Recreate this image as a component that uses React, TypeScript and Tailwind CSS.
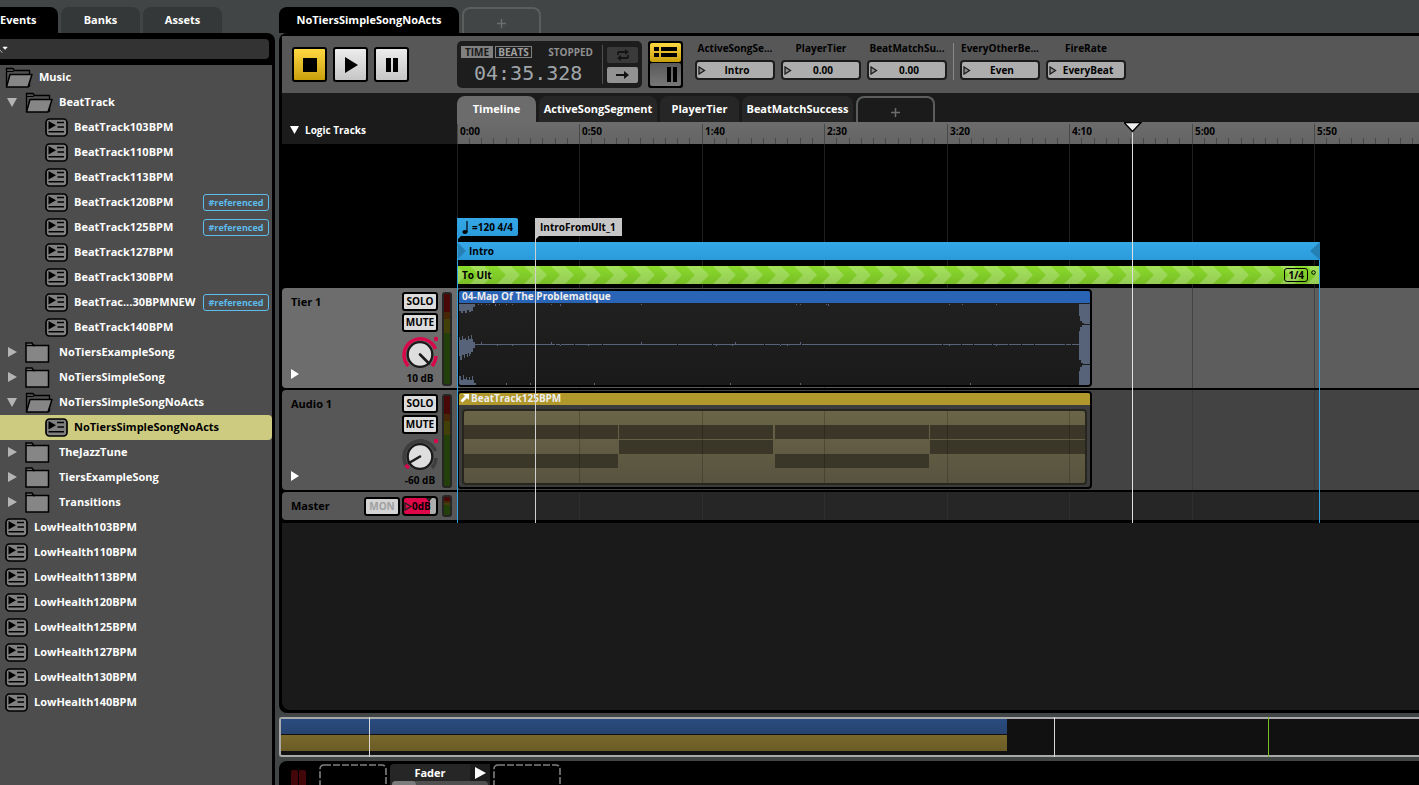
import React from 'react';

const SCALE = 2.45; // pixels per second
const at = (seconds: number) => Math.floor(seconds * SCALE);

type Row = {
  kind: 'folder' | 'folder-open' | 'event';
  label: string;
  depth: 0 | 1 | 2;
  arrow?: 'open' | 'closed';
  tag?: boolean;
  selected?: boolean;
};

const rows: Row[] = [
  { kind: 'folder-open', label: 'Music', depth: 0 },
  { kind: 'folder-open', label: 'BeatTrack', depth: 1, arrow: 'open' },
  { kind: 'event', label: 'BeatTrack103BPM', depth: 2 },
  { kind: 'event', label: 'BeatTrack110BPM', depth: 2 },
  { kind: 'event', label: 'BeatTrack113BPM', depth: 2 },
  { kind: 'event', label: 'BeatTrack120BPM', depth: 2, tag: true },
  { kind: 'event', label: 'BeatTrack125BPM', depth: 2, tag: true },
  { kind: 'event', label: 'BeatTrack127BPM', depth: 2 },
  { kind: 'event', label: 'BeatTrack130BPM', depth: 2 },
  { kind: 'event', label: 'BeatTrac...30BPMNEW', depth: 2, tag: true },
  { kind: 'event', label: 'BeatTrack140BPM', depth: 2 },
  { kind: 'folder', label: 'NoTiersExampleSong', depth: 1, arrow: 'closed' },
  { kind: 'folder', label: 'NoTiersSimpleSong', depth: 1, arrow: 'closed' },
  { kind: 'folder-open', label: 'NoTiersSimpleSongNoActs', depth: 1, arrow: 'open' },
  { kind: 'event', label: 'NoTiersSimpleSongNoActs', depth: 2, selected: true },
  { kind: 'folder', label: 'TheJazzTune', depth: 1, arrow: 'closed' },
  { kind: 'folder', label: 'TiersExampleSong', depth: 1, arrow: 'closed' },
  { kind: 'folder', label: 'Transitions', depth: 1, arrow: 'closed' },
  { kind: 'event', label: 'LowHealth103BPM', depth: 0 },
  { kind: 'event', label: 'LowHealth110BPM', depth: 0 },
  { kind: 'event', label: 'LowHealth113BPM', depth: 0 },
  { kind: 'event', label: 'LowHealth120BPM', depth: 0 },
  { kind: 'event', label: 'LowHealth125BPM', depth: 0 },
  { kind: 'event', label: 'LowHealth127BPM', depth: 0 },
  { kind: 'event', label: 'LowHealth130BPM', depth: 0 },
  { kind: 'event', label: 'LowHealth140BPM', depth: 0 },
];

const majors = [
  { t: 0, label: '0:00' },
  { t: 50, label: '0:50' },
  { t: 100, label: '1:40' },
  { t: 150, label: '2:30' },
  { t: 200, label: '3:20' },
  { t: 250, label: '4:10' },
  { t: 300, label: '5:00' },
  { t: 350, label: '5:50' },
];

const FolderOpen = () => (
  <svg width="28" height="21" viewBox="0 0 28 21" className="shrink-0">
    <path d="M1.5 19V1.5h6.5l1.5 2h15V19z" fill="#505050" stroke="#000" strokeWidth="1.3" />
    <path d="M1.5 4.5H8l1.5-1" fill="none" stroke="#000" />
    <path d="M5 7.5h22L23 20H1.5z" fill="#868686" stroke="#000" strokeWidth="1.5" strokeLinejoin="round" />
  </svg>
);

const Folder = () => (
  <svg width="28" height="21" viewBox="0 0 28 21" className="shrink-0">
    <path d="M1 20V1h6l1.500 2.500h15V20z" fill="#868686" stroke="#000" strokeWidth="1.5" />
    <path d="M1 3.500H10" stroke="#000" strokeWidth="1.5" />
  </svg>
);

const EventIcon = () => (
  <svg width="23" height="19" viewBox="0 0 23 19" className="shrink-0">
    <rect x="1" y="1" width="21" height="17" rx="3.5" fill="#808080" stroke="#000" strokeWidth="1.7" />
    <path d="M3.5 3v8.5L11 7.2z" fill="#000" />
    <path d="M12 4.5h7M12.5 9h6.5M3.5 13.8h15.5" stroke="#000" strokeWidth="1.4" />
  </svg>
);

const Arrow = ({ open }: { open: boolean }) => (
  <svg width="12" height="12" viewBox="0 0 12 12" className="shrink-0">
    <path d={open ? 'M1 2h10L6 11z' : 'M2 1v10l9-5z'} fill="#b4b4b4" />
  </svg>
);

const TreeRow = ({ row }: { row: Row }) => {
  const indent =
    row.depth === 0 ? 'pl-[5px]' : row.depth === 1 ? 'pl-[6px]' : 'pl-[45px]';
  return (
    <li
      className={`flex h-[25px] items-center pr-[3px] pb-px leading-4 ${indent} ${
        row.selected ? 'rounded-r bg-[#cccb80] text-black' : 'text-white'
      }`}
    >
      {row.arrow && (
        <span className="mr-[7px] flex">
          <Arrow open={row.arrow === 'open'} />
        </span>
      )}
      {row.kind === 'folder' && <Folder />}
      {row.kind === 'folder-open' && <FolderOpen />}
      {row.kind === 'event' && <EventIcon />}
      <span className="ml-[6px] whitespace-nowrap">{row.label}</span>
      {row.tag && (
        <span className="ml-auto w-[66px] shrink-0 rounded-[3px] border border-[#5cbcec] text-center text-[9px] leading-[15px] text-[#5cbcec]">
          #referenced
        </span>
      )}
    </li>
  );
};

const Browser = () => (
  <aside className="flex w-[275px] shrink-0 flex-col">
    <div className="flex gap-[3px] pt-[7px] text-white">
      <button className="h-[26px] w-[58px] rounded-tr-lg bg-black pr-[22px]">Events</button>
      <button className="h-[26px] w-[79px] rounded-t-lg bg-[#343838]">Banks</button>
      <button className="h-[26px] w-[79px] rounded-t-lg bg-[#343838]">Assets</button>
    </div>
    <div className="flex grow flex-col rounded-tr-lg bg-black pr-[3px]">
      <label className="mt-[6px] mr-[3px] mb-[6px] flex h-5 items-center rounded-r bg-[#333]">
        <svg width="8" height="10" viewBox="0 0 8 10">
          <path d="M0 6l2.5 3M3 3h4.500L5.200 5.500z" fill="#fff" stroke="#fff" strokeWidth=".6" />
        </svg>
        <input aria-label="Search events" className="h-5 w-full bg-transparent text-white outline-none" />
      </label>
      <ul className="grow bg-[#4d4d4d]">
        {rows.map((row, i) => (
          <TreeRow key={i} row={row} />
        ))}
      </ul>
    </div>
  </aside>
);

const TransportButton = ({ label, on, children }: { label: string; on?: boolean; children: React.ReactNode }) => (
  <button
    aria-label={label}
    className={`flex h-[35px] w-[35px] items-center justify-center rounded-[3px] border-2 border-black bg-linear-to-b ${
      on ? 'from-[#ffd940] to-[#c99f08]' : 'from-[#ececec] to-[#c6c6c6]'
    }`}
  >
    {children}
  </button>
);

const Param = ({ name, value }: { name: string; value: string }) => (
  <label className="flex w-20 flex-col items-center text-[10px] text-black">
    <span className="leading-[14px] whitespace-nowrap">{name}</span>
    <span className="mt-[5px] flex h-5 w-20 items-center rounded border-2 border-[#1c1c1c] bg-[#adadad] pl-px">
      <svg width="8" height="9" viewBox="0 0 8 9" className="shrink-0">
        <path d="M1 1v7l5.500-3.500z" fill="#909090" stroke="#1c1c1c" strokeWidth="1.3" />
      </svg>
      <input defaultValue={value} className="w-full min-w-0 bg-transparent pr-[5px] text-center outline-none" />
    </span>
  </label>
);

const Toolbar = () => (
  <div className="flex h-[57px] items-start bg-[#575757]">
    <div className="flex gap-[6px] pt-[11px] pl-[10px]">
      <TransportButton label="Stop" on>
        <span className="h-[14px] w-[14px] bg-black" />
      </TransportButton>
      <TransportButton label="Play">
        <svg width="16" height="16" viewBox="0 0 16 16"><path d="M2 0v16l13-8z" /></svg>
      </TransportButton>
      <TransportButton label="Pause">
        <svg width="12" height="14" viewBox="0 0 12 14"><path d="M0 0h5v14H0zM7 0h5v14H7z" /></svg>
      </TransportButton>
    </div>
    <div className="mt-[5px] ml-12 flex h-[47px] w-[185px] items-center rounded-[5px] bg-[#1d1d1d] pr-1 pl-1">
      <div className="flex w-[141px] flex-col">
        <div className="flex items-center pr-[9px] text-[10px] leading-[10px] text-[#a0a0a0]">
          <button className="h-3 w-8 bg-[#808080] text-[#1a1a1a]">TIME</button>
          <button className="ml-0.5 h-3 w-[37px] border border-[#808080]">BEATS</button>
          <span className="ml-auto text-[#909090]">STOPPED</span>
        </div>
        <div className="mt-1 pl-[13px] font-['DejaVu_Sans_Mono',monospace] text-[20px] leading-[22px] font-normal text-[#a0a5aa]">
          04:35.328
        </div>
      </div>
      <div className="mr-1 h-[39px] w-px bg-[#505050]" />
      <div className="flex flex-col gap-1">
        <button aria-label="Loop" className="flex h-4 w-[31px] items-center justify-center rounded-[2px] bg-[#3a3a3a]">
          <svg width="12" height="12" viewBox="0 0 12 12" fill="none" stroke="#151515" strokeWidth="1.800">
            <path d="M1 6V4q0-1 1-1h7M11 6v2q0 1-1 1H3" />
            <path d="M8 0l4 3-4 3zM4 6L0 9l4 3z" fill="#151515" stroke="none" />
          </svg>
        </button>
        <button aria-label="Follow" className="flex h-4 w-[31px] items-center justify-center rounded-[2px] bg-[#929292]">
          <svg width="13" height="8" viewBox="0 0 13 8"><path d="M0 3h8V0l5 4-5 4V5H0z" fill="#111" /></svg>
        </button>
      </div>
    </div>
    <div className="mt-[5px] ml-[6px] flex h-[47px] w-[35px] flex-col gap-px rounded-[3px] border-2 border-black bg-black">
      <button aria-label="Tracks view" className="flex grow items-center justify-center rounded-[2px] bg-linear-to-b from-[#ffd940] to-[#c99f08]">
        <svg width="23" height="10" viewBox="0 0 23 10"><path d="M0 0h5v4H0zM7 0h16v4H7zM0 6h5v4H0zM7 6h16v4H7z" /></svg>
      </button>
      <button aria-label="Console view" className="flex grow items-center justify-end rounded-[2px] bg-linear-to-b from-[#5a5a5a] to-[#777] pr-1">
        <svg width="10" height="15" viewBox="0 0 10 15"><path d="M0 0h4v15H0zM6 0h4v15H6z" /></svg>
      </button>
    </div>
    <div className="flex gap-[6px] pt-[5px] pl-3">
      <Param name="ActiveSongSe..." value="Intro" />
      <Param name="PlayerTier" value="0.00" />
      <Param name="BeatMatchSu..." value="0.00" />
      <div className="mt-[2px] h-[37px] w-px bg-[#8a8a8a]" />
      <Param name="EveryOtherBe..." value="Even" />
      <Param name="FireRate" value="EveryBeat" />
    </div>
  </div>
);

const AddTab = ({ label }: { label: string }) => (
  <button
    aria-label={label}
    className="flex h-[26px] w-[79px] items-center justify-center rounded-t-lg border-2 border-b-0 border-[#5c5e5e] pt-1"
  >
    <svg width="9" height="9" viewBox="0 0 9 9"><path d="M4.500 0v9M0 4.500h9" stroke="#6c6e6e" strokeWidth="1.500" /></svg>
  </button>
);

const Ruler = () => (
  <div className="relative h-[22px] overflow-hidden bg-linear-to-b from-[#6c6c6c] to-[#646464]">
    <svg className="absolute inset-0 h-full w-full">
      {Array.from({ length: 90 }, (_, i) => (
        <rect key={i} x={at(i * 5)} y={i % 10 === 0 ? 2 : 16} width="1" height="20" fill="#484848" />
      ))}
    </svg>
    {majors.map((m) => (
      <span key={m.t} className="absolute top-[2px] text-[10px] leading-[14px] text-black" style={{ left: at(m.t) + 3 }}>
        {m.label}
      </span>
    ))}
  </div>
);

const GridLines = () => (
  <div className="pointer-events-none absolute inset-0">
    {majors.map((m) => (
      <div key={m.t} className="absolute inset-y-0 w-px bg-[#333]/60" style={{ left: at(m.t) }} />
    ))}
  </div>
);

const LogicLanes = () => (
  <div className="relative h-36 overflow-hidden bg-black pt-[74px] text-[10px] leading-[18px] text-black">
    <GridLines />
    <div className="relative flex h-6 items-start">
      <div className="flex w-[78px]">
        <div className="relative flex h-[18px] w-[61px] items-center gap-1 rounded-r-[2px] bg-linear-to-b from-[#35a8e8] to-[#2a9ada] pl-[5px]">
          <svg width="6" height="13" viewBox="0 0 6 13"><path d="M5 0v11" stroke="#000" strokeWidth="1.200" /><ellipse cx="3" cy="11" rx="2.600" ry="2" /></svg>
          <span className="whitespace-nowrap">=120 4/4</span>
          <svg className="absolute top-[18px] left-0" width="5" height="5"><path d="M0 0h4L0 4z" fill="#2f9fdf" /></svg>
        </div>
      </div>
      <div className="relative h-[18px] bg-[#c6c6c6] pr-[6px] pl-[5px] whitespace-nowrap">
        IntroFromUlt_1
        <svg className="absolute top-[18px] left-0" width="5" height="5"><path d="M0 0h4L0 4z" fill="#c6c6c6" /></svg>
      </div>
    </div>
    <div className="relative flex h-[18px] w-[863px] items-center justify-between bg-linear-to-b from-[#35a8e8] to-[#2a9ada]">
      <div className="flex items-center">
        <svg width="9" height="18" viewBox="0 0 9 18"><path d="M0 0v18l9-9z" fill="#2580b5" /></svg>
        <span className="ml-[3px]">Intro</span>
      </div>
      <svg width="10" height="18" viewBox="0 0 10 18"><path d="M10 0v18L0 9z" fill="#2580b5" /></svg>
    </div>
    <div className="relative mt-[6px] flex h-[18px] w-[862px] items-center justify-between bg-linear-to-b from-[#8adb2c] to-[#78bd26]">
      <svg className="absolute inset-0" width="862" height="18">
        <defs>
          <pattern id="chev" width="27" height="18" patternUnits="userSpaceOnUse" x="13">
            <path d="M0 0h14l9 9-9 9H0l9-9z" fill="#fff" fillOpacity=".22" />
          </pattern>
        </defs>
        <rect width="862" height="18" fill="url(#chev)" />
      </svg>
      <span className="relative pl-[5px]">To Ult</span>
      <span className="relative flex items-center gap-[3px] pr-[3px]">
        <span className="rounded-[3px] border border-black px-[3px] leading-[12px]">1/4</span>
        <svg width="5" height="11" viewBox="0 0 5 11"><circle cx="2.500" cy="2.500" r="1.800" fill="none" stroke="#000" /></svg>
      </span>
    </div>
  </div>
);

const Meter = ({ small }: { small?: boolean }) => (
  <div className={`w-[10px] rounded-[3px] border-2 border-[#262626] bg-[#24400a] ${small ? 'h-[22px]' : 'h-[94px]'}`}>
    <div className={small ? 'h-1 bg-[#480808]' : 'h-[18px] bg-[#480808]'} />
    <div className={small ? 'h-0.5 bg-[#482608]' : 'h-[7px] bg-[#482608]'} />
    <div className={small ? 'h-0.5 bg-[#424008]' : 'h-[14px] bg-[#424008]'} />
  </div>
);

const Knob = ({ loud }: { loud?: boolean }) => (
  <svg width="36" height="35" viewBox="0 0 36 35">
    <path
      d="M6.300 30A16.300 16.300 0 1 1 33.500 13M34 20a16.300 16.300 0 0 1-4 10"
      fill="none"
      stroke={loud ? '#d9084a' : '#3e3e3e'}
      strokeWidth="3.500"
    />
    {!loud && <path d="M3.500 27l3.500 3" stroke="#d9084a" strokeWidth="3.500" />}
    <circle cx="34" cy="3" r="2.200" fill="#d9084a" />
    <circle cx="18" cy="18.500" r="12.300" fill="#dedede" stroke="#1a1a1a" strokeWidth="2.300" />
    <path d={loud ? 'M18 18.500l9 9' : 'M18 18.500l-11 6.500'} stroke="#1a1a1a" strokeWidth="2.600" strokeLinecap="round" />
  </svg>
);

const PadButton = ({ children }: { children: React.ReactNode }) => (
  <button className="h-[19px] w-9 rounded-[3px] border-2 border-black bg-[#dcdcdc] text-[10px] leading-[15px] text-black">
    {children}
  </button>
);

const TrackHead = ({ name, level, loud }: { name: string; level: string; loud?: boolean }) => (
  <div className={`flex h-[100px] rounded-l pt-1 ${loud ? 'bg-[#6d6d6d]' : 'bg-[#575757]'}`}>
    <div className="flex grow flex-col justify-between pb-[9px] pl-[9px]">
      <span className="leading-[20px]">{name}</span>
      <button aria-label={`Expand ${name}`} className="flex w-3">
        <svg width="8" height="10" viewBox="0 0 8 10"><path d="M0 0v10l8-5z" fill="#fff" /></svg>
      </button>
    </div>
    <div className="flex w-9 flex-col items-center gap-0.5">
      <PadButton>SOLO</PadButton>
      <PadButton>MUTE</PadButton>
      <div className="pt-0.5"><Knob loud={loud} /></div>
      <span className="-mt-0.5 text-[10px] leading-[14px] whitespace-nowrap">{level}</span>
    </div>
    <div className="pr-[5px] pl-1">
      <Meter />
    </div>
  </div>
);

// stray peaks on the top, centre and bottom lines of the waveform, as x offsets
const topPeaks = [19, 22, 27, 30, 36, 40, 47, 53, 92, 101, 182, 337, 341, 367, 369, 490, 503, 537];
const midPeaks = [22, 38, 53, 92, 101, 129, 182, 257, 273, 276, 321, 328, 341, 490, 537];
const lowPeaks = [19, 23, 33, 47, 52, 58, 66, 71, 79, 101, 108, 135, 249, 254, 261, 271, 283, 302, 324, 341, 367, 496, 504, 511, 518];
const gaps = [96, 101, 115, 143, 218, 253, 305, 321, 342, 483, 502, 514, 533, 549, 562, 575, 606, 612];

const Waveform = () => (
  <svg className="block" width="631" height="82" viewBox="0 0 631 82">
    <g fill="#566379">
      <path d="M0 0h16v3h-2v4h-2v1h-2v-2H8v3H6V7H4v2H2V7H0z" />
      <path d="M0 33h1v3h2v-4h1v3h2v-1h1v2h2v-4h1v3h2v-4h1v4h1v3h2v6h-2v4h-2v2h-1v2h-1v-3H9v4H8v-3H6v4H5v-3H3v5H1v-4H0z" />
      <path d="M0 82v-10h2v4h2v-5h1v4h2v-2h1v3h2v-3h1v3h2v-4h1v4h1v3h2v3z" />
      <path d="M16 40h604v1H16z" />
      {topPeaks.map((x, i) => (
        <rect key={x} x={x} y="0" width="1" height={i % 5 === 4 ? 2 : 1} />
      ))}
      {midPeaks.map((x, i) => (
        <rect key={x} x={x} y={i % 3 ? 40 : 38} width="1" height={i % 3 ? 2 : 3} />
      ))}
      {lowPeaks.map((x, i) => (
        <rect key={x} x={x} y={i % 4 === 3 ? 79 : 81} width="1" height="3" />
      ))}
      <path d="M620 0h11v20h-6v-1h-2v-2h-2v-5h-1zM620 27h1v-4h2v-2h8v39h-7v-1h-2v-3h-2zM620 67h1v-4h2v-2h8v21h-11z" />
    </g>
    {gaps.map((x) => (
      <rect key={x} x={x} y="40" width="1" height="1" fill="#1d1d1d" />
    ))}
  </svg>
);

// dark cells of the nested event, as [x, width, row]
const blocks: [number, number, number][] = [
  [0, 154, 0], [0, 154, 2], [155, 154, 0], [155, 154, 1],
  [311, 154, 0], [311, 154, 2], [466, 155, 0], [466, 155, 1],
];
const blockTops = [14, 29, 43];

const NestedEvent = () => (
  <svg className="mt-1 ml-[3px] block rounded-[4px] border-2 border-[#26261f] bg-linear-to-b from-[#6a6548] to-[#58533e]" width="625" height="76" viewBox="0 0 621 72">
    {blocks.map(([x, w, r]) => (
      <rect key={`${x}-${r}`} x={x} y={blockTops[r]} width={w} height="14" fill="#3a3728" />
    ))}
    {majors.map((m) => (
      <rect key={m.t} x={at(m.t) - 7} y="0" width="1" height="72" fill="#000" fillOpacity=".2" />
    ))}
  </svg>
);

const Line = ({ left, className }: { left: number; className: string }) => (
  <div className={`pointer-events-none absolute w-px ${className}`} style={{ left }} />
);

const Editor = () => (
  <section className="flex h-[680px] flex-col rounded-l-lg bg-black pt-[3px] pb-[3px] pl-[3px]">
    <Toolbar />
    <div className="flex">
      <div className="flex w-[175px] shrink-0 flex-col bg-black">
        <div className="flex h-[51px] items-end gap-[5px] bg-[#1b1b1b] pb-[6px] pl-2 text-[10px] leading-[16px] text-white">
          <svg width="10" height="16" viewBox="0 0 10 16"><path d="M0 4h9L4.500 12z" fill="#fff" /></svg>
          Logic Tracks
        </div>
        <div className="mt-36 flex flex-col gap-0.5">
          <TrackHead name="Tier 1" level="10 dB" loud />
          <TrackHead name="Audio 1" level="-60 dB" />
          <div className="flex h-[28px] items-center rounded-l bg-[#575757] pr-[5px] pl-[9px]">
            <span className="grow">Master</span>
            <button className="h-[19px] w-9 rounded-[3px] border-2 border-black bg-[#d4d4d4] text-[10px] leading-[15px] text-[#a0a0a0]">MON</button>
            <button className="relative mr-1 ml-0.5 flex h-5 w-9 items-center rounded-[4px] border-2 border-black bg-linear-to-r from-[#e0064a] from-80% to-[#adadad] to-80% text-[10px] text-black">
              <svg width="8" height="9" viewBox="0 0 8 9" className="shrink-0"><path d="M1 1v7l6-3.500z" fill="none" stroke="#222" strokeWidth="1.400" /></svg>
              0dB
              <svg className="absolute top-0 right-1" width="6" height="4" viewBox="0 0 6 4"><path d="M0 0h6L3 4z" fill="#222" /></svg>
            </button>
            <Meter small />
          </div>
        </div>
      </div>
      <div className="relative min-w-0 grow">
        <div className="flex h-[29px] items-end gap-[3px] bg-[#1b1b1b] text-white">
          <button className="h-[26px] w-[79px] rounded-t-lg bg-[#6c6c6c]">Timeline</button>
          <button className="h-[26px] w-[118px] rounded-t-lg bg-[#262626]">ActiveSongSegment</button>
          <button className="h-[26px] w-[79px] rounded-t-lg bg-[#262626]">PlayerTier</button>
          <button className="h-[26px] w-[111px] rounded-t-lg bg-[#262626]">BeatMatchSuccess</button>
          <AddTab label="Add parameter sheet" />
        </div>
        <Ruler />
        <LogicLanes />
        <div className="flex flex-col gap-0.5 bg-black pb-[3px] text-[10px] text-[#eee]">
          <div className="relative h-[100px] bg-[#5d5d5d] pt-px">
            <GridLines />
            <div className="relative h-[98px] w-[635px] overflow-hidden rounded-[4px] border-2 border-black bg-linear-to-b from-[#212121] to-[#1a1a1a]">
              <div className="mb-px h-3 bg-[#2a64b6] pl-[3px] leading-[11px]">04-Map Of The Problematique</div>
              <Waveform />
            </div>
          </div>
          <div className="relative h-[100px] bg-[#434343] pt-px">
            <GridLines />
            <div className="relative h-[98px] w-[635px] overflow-hidden rounded-[4px] border-2 border-black bg-[#3c3c3c]">
              <div className="flex h-3 items-start gap-px bg-[#b0982c] pl-px leading-[11px]">
                <svg width="10" height="11" viewBox="0 0 10 11"><path d="M3 1h6v6L7 5 2.500 9.500.5 7.500 5 3z" fill="#fff" /></svg>
                BeatTrack125BPM
              </div>
              <NestedEvent />
            </div>
          </div>
          <div className="relative h-[28px] bg-[#262626]">
            <GridLines />
          </div>
        </div>
        <Line left={0} className="top-[125px] bottom-0 bg-[#2f9fdf]" />
        <Line left={78} className="top-[142px] bottom-0 bg-[#d0d0d0]" />
        <Line left={862} className="top-[167px] bottom-0 bg-[#2f9fdf]" />
        <Line left={675} className="top-[38px] bottom-0 bg-[#e0e0e0]" />
        <svg className="absolute top-[29px] left-[667px]" width="18" height="11" viewBox="0 0 18 11">
          <path d="M0 .5h17L8.500 9.500z" fill="#eee" stroke="#000" strokeWidth="1.400" />
        </svg>
      </div>
    </div>
    <div className="grow rounded-bl-lg bg-[#1a1a1a]" />
  </section>
);

const Overview = () => (
  <div className="relative mt-1 h-10 rounded-l-[3px] border-2 border-r-0 border-[#a9a9a9] bg-[#111]">
    <div className="h-[15px] w-[726px] bg-linear-to-b from-[#294b7e] to-[#274470]" />
    <div className="mt-px h-4 w-[726px] bg-linear-to-b from-[#7a692b] to-[#6a5b26]" />
    <Line left={88} className="-inset-y-0.5 bg-[#d8d8d8]" />
    <Line left={773} className="-inset-y-0.5 bg-[#d8d8d8]" />
    <Line left={987} className="-inset-y-0.5 bg-[#78bd26]" />
  </div>
);

const EffectSlot = () => (
  <svg width="68" height="24" viewBox="0 0 68 24">
    <rect x="1" y="1" width="66" height="40" rx="4" fill="none" stroke="#808080" strokeWidth="1.600" strokeDasharray="7 2" />
  </svg>
);

const Deck = () => (
  <div className="mt-1 flex h-6 items-start rounded-tl-lg bg-black pt-[3px] pl-3">
    <div className="mt-[6px] mr-[13px] flex gap-px">
      <div className="h-5 w-[7px] rounded-t-[2px] bg-[#430609]" />
      <div className="h-5 w-[7px] rounded-t-[2px] bg-[#430609]" />
    </div>
    <EffectSlot />
    <div className="mx-[3px] flex h-[21px] w-[100px] flex-col rounded-t bg-[#262626] text-white">
      <div className="flex h-[17px] items-center leading-4">
        <span className="w-20 text-center">Fader</span>
        <button aria-label="Fader output" className="flex h-[17px] w-5 items-center justify-center bg-[#1c1c1c]">
          <svg width="11" height="12" viewBox="0 0 11 12"><path d="M0 0v12l11-6z" fill="#fff" /></svg>
        </button>
      </div>
      <div className="ml-0.5 h-1 w-24 rounded-t bg-[#505050]">
        <div className="h-1 w-6 rounded-t bg-[#7c7c7c]" />
      </div>
    </div>
    <EffectSlot />
  </div>
);

const App: React.FC = () => (
  <div className="flex h-screen gap-1 overflow-hidden bg-[#414545] font-['Open_Sans','Noto_Sans',sans-serif] text-[11px] font-bold">
    <Browser />
    <main className="flex min-w-0 grow flex-col">
      <div className="flex gap-[3px] pt-[7px]">
        <button className="h-[26px] w-[180px] rounded-t-lg bg-black text-white">NoTiersSimpleSongNoActs</button>
        <AddTab label="Open new tab" />
      </div>
      <Editor />
      <Overview />
      <Deck />
    </main>
  </div>
);

export default App;
